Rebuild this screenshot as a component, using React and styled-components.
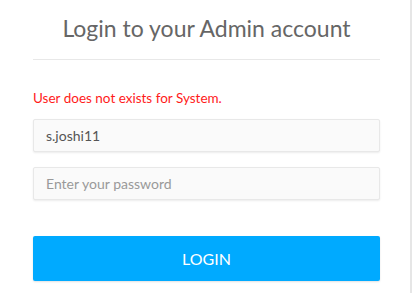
import React from "react";
import styled, { createGlobalStyle } from "styled-components";

const Global = createGlobalStyle`
  html, body { margin: 0; padding: 0; background: #fff; }
  body { font-family: Lato, "Open Sans", sans-serif; }
  * { box-sizing: border-box; }
`;

const Page = styled.div`
  display: flex;
  height: 293px;
  width: 412px;
  background: #fff;
`;

const Card = styled.div`
  width: 412px;
  height: 100%;
  border-right: 2px solid #e6e6e6;
  padding: 13px 30px 0 33px;
  display: flex;
  flex-direction: column;
`;

const Title = styled.h1`
  margin: 0;
  font-family: Lato, sans-serif;
  font-weight: 400;
  font-size: 23px;
  line-height: 30px;
  color: #666;
  text-align: center;
  padding-bottom: 16px;
  border-bottom: 1px solid #e8e8e8;
`;

const Error = styled.div`
  margin-top: 30px;
  font-size: 13.5px;
  line-height: 16px;
  color: #ff1a1a;
`;

const Input = styled.input`
  display: block;
  width: 100%;
  height: 33px;
  margin-top: ${(p) => p.$mt}px;
  padding: 0 12px;
  background: #fafafa;
  border: 1px solid #e8e8e8;
  border-radius: 2px;
  box-shadow: 0 1px 2px rgba(0, 0, 0, 0.08);
  font-family: Lato, sans-serif;
  font-size: 14px;
  color: #555;
  outline: none;
  &::placeholder { color: #999; }
`;

const Button = styled.button`
  display: block;
  width: 100%;
  height: 45px;
  margin-top: 36px;
  background: #00aaff;
  border: none;
  border-radius: 2px;
  box-shadow: 0 1px 2px rgba(0, 0, 0, 0.12);
  color: #fff;
  font-family: Lato, sans-serif;
  font-size: 16px;
  text-transform: uppercase;
  cursor: pointer;
`;

export default function App() {
  return (
    <>
      <Global />
      <Page>
        <Card>
          <Title>Login to your Admin account</Title>
          <Error>User does not exists for System.</Error>
          <Input $mt={13} defaultValue="s.joshi11" />
          <Input $mt={15} type="password" placeholder="Enter your password" />
          <Button>Login</Button>
        </Card>
      </Page>
    </>
  );
}
